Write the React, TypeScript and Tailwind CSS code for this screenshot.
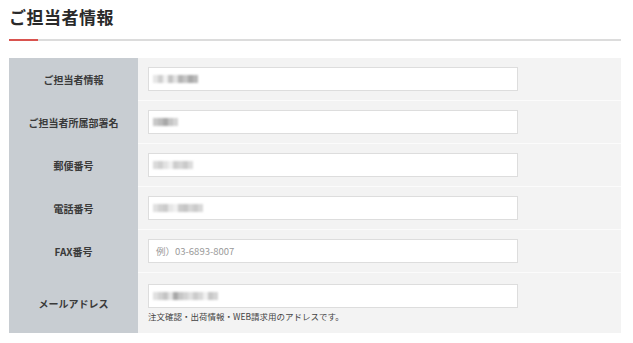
const font = { fontFamily: '"Noto Sans CJK JP", "Liberation Sans", sans-serif' }

// ぼかし（モザイク）表示の入力値
function Mosaic({ shades }: { shades: string[] }) {
  return (
    <div className="flex items-center blur-[0.8px]">
      {shades.map((c, i) => (
        <span key={i} className="h-[8px] w-[5px]" style={{ backgroundColor: c }} />
      ))}
    </div>
  )
}

const rows = [
  { label: "ご担当者情報", shades: ["#e6e6e6", "#cfcfcf", "#f2f2f2", "#c4c4c4", "#e2e2e2", "#b4b4b4", "#c6c6c6", "#a9a9a9", "#b8b8b8"] },
  { label: "ご担当者所属部署名", shades: ["#c8c8c8", "#bcbcbc", "#a8a8a8", "#c4c4c4", "#d4d4d4"] },
  { label: "郵便番号", shades: ["#dadada", "#d0d0d0", "#e2e2e2", "#f0f0f0", "#cdcdcd", "#d6d6d6", "#cacaca", "#dcdcdc"] },
  { label: "電話番号", shades: ["#e0e0e0", "#d2d2d2", "#cbcbcb", "#e6e6e6", "#f0f0f0", "#cccccc", "#c6c6c6", "#d6d6d6", "#cbcbcb", "#d8d8d8"] },
]

function Label({ children }: { children: React.ReactNode }) {
  return (
    <div className="flex w-[129px] shrink-0 items-center justify-center bg-[#c8cdd2] text-[10px] font-bold text-[#3a3a3a]">
      {children}
    </div>
  )
}

export default function App() {
  return (
    <div className="h-[343px] w-[633px] bg-white px-[9px] pt-[6px] text-[#333]" style={font}>
      <h2 className="text-[17px] font-bold leading-[22px] tracking-[0.5px] text-[#2a2a2a]">ご担当者情報</h2>
      <div className="mt-[11px] flex h-[2px] w-[612px] items-center">
        <div className="h-[2px] w-[29px] bg-[#d9534f]" />
        <div className="h-[2px] flex-1 bg-[#dcdcdc]" />
      </div>

      <div className="mt-[17px] w-[612px]">
        {rows.map((r) => (
          <div key={r.label} className="flex h-[43px]">
            <Label>{r.label}</Label>
            <div className="flex flex-1 items-center border-b border-[#fbfbfb] bg-[#f3f3f3] pl-[10px]">
              <div className="flex h-[24px] w-[370px] items-center border border-[#dddddd] bg-white px-[4px]">
                <Mosaic shades={r.shades} />
              </div>
            </div>
          </div>
        ))}
        <div className="flex h-[43px]">
          <Label>FAX番号</Label>
          <div className="flex flex-1 items-center border-b border-[#fbfbfb] bg-[#f3f3f3] pl-[10px]">
            <div className="flex h-[24px] w-[370px] items-center border border-[#dddddd] bg-white px-[7px] text-[9.5px] text-[#9a9a9a]">
              例）03-6893-8007
            </div>
          </div>
        </div>
        <div className="flex h-[60px]">
          <Label>メールアドレス</Label>
          <div className="flex flex-1 flex-col justify-center bg-[#f3f3f3] pl-[10px]">
            <div className="flex h-[24px] w-[370px] items-center border border-[#dddddd] bg-white px-[4px]">
              <Mosaic shades={["#e0e0e0", "#d2d2d2", "#c4c4c4", "#e4e4e4", "#a8a8a8", "#c6c6c6", "#d2d2d2", "#e0e0e0", "#cbcbcb", "#d8d8d8", "#f0f0f0", "#c8c8c8", "#d4d4d4"]} />
            </div>
            <p className="mt-[2px] text-[8.5px] leading-[12px] text-[#444]">注文確認・出荷情報・WEB請求用のアドレスです。</p>
          </div>
        </div>
      </div>
    </div>
  )
}
